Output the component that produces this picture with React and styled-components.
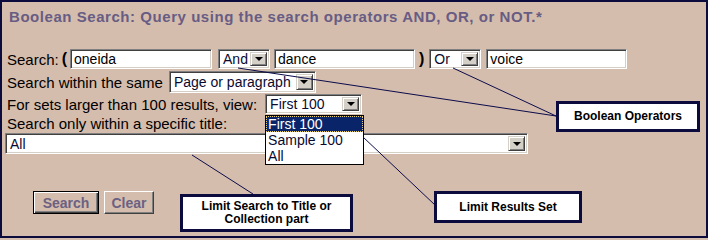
import React from 'react'
import styled, { createGlobalStyle } from 'styled-components'

const GlobalStyle = createGlobalStyle`
  html, body { margin: 0; padding: 0; background: #d5bdad; }
  body { font-family: "Liberation Sans", Arial, sans-serif; }
`

const Frame = styled.div`
  position: relative;
  width: 708px;
  height: 238px;
  box-sizing: border-box;
  border: 2px solid #0b0b3d;
  background: #d5bdad;
  padding-left: 3px;
  overflow: hidden;
`

const Title = styled.h1`
  margin: 0;
  box-sizing: border-box;
  height: 47px;
  padding: 6px 0 0 4px;
  font-size: 15px;
  line-height: 18px;
  letter-spacing: 0.55px;
  font-weight: bold;
  color: #675c84;
`

const Row = styled.div`
  display: flex;
  align-items: center;
  height: ${p => p.h || 20}px;
  margin-top: ${p => p.mt || 0}px;
`

const Label = styled.span`
  font-size: 15px;
  color: #000;
  margin-left: 2px;
  margin-right: ${p => p.mr ?? 5}px;
  white-space: nowrap;
`

const Paren = styled.b`
  font-size: 16px;
  margin: 0 ${p => p.mr || 5}px 0 ${p => p.ml || 0}px;
`

const sunken = `
  box-sizing: border-box;
  background: #fff;
  border: 1px solid;
  border-color: #808080 #fff #fff #808080;
  box-shadow: inset 1px 1px #404040, inset -1px -1px #d4d0c8;
`

const TextField = styled.input`
  ${sunken}
  width: ${p => p.w}px;
  height: 20px;
  margin-right: ${p => p.mr || 0}px;
  padding: 0 0 0 3px;
  font-family: "Liberation Sans", Arial, sans-serif;
  font-size: 14px;
  color: #000;
  outline: none;
`

const SelectWrap = styled.div`
  position: relative;
`

const SelectBox = styled.div`
  ${sunken}
  display: flex;
  align-items: center;
  width: ${p => p.w}px;
  height: ${p => p.h || 20}px;
  margin-right: ${p => p.mr || 0}px;
  padding: 2px;
`

const SelectText = styled.span`
  flex: 1;
  padding-left: 2px;
  font-size: 14px;
  color: #0a0a30;
  white-space: nowrap;
  overflow: hidden;
`

const ArrowBtn = styled.span`
  box-sizing: border-box;
  flex: none;
  width: 17px;
  height: 100%;
  display: grid;
  place-items: center;
  background: #d4d0c8;
  border: 1px solid;
  border-color: #d4d0c8 #404040 #404040 #d4d0c8;
  box-shadow: inset 1px 1px #fff, inset -1px -1px #808080;
  &::after {
    content: '';
    border-left: 4px solid transparent;
    border-right: 4px solid transparent;
    border-top: 4px solid #000;
  }
`

const ListBox = styled.ul`
  position: absolute;
  left: 0;
  top: 21px;
  z-index: 2;
  width: 99px;
  margin: 0;
  padding: 0;
  list-style: none;
  box-sizing: border-box;
  border: 1px solid #000;
  background: #fff;
`

const ListItem = styled.li`
  box-sizing: border-box;
  height: 16px;
  line-height: 14px;
  padding-left: 1px;
  font-size: 14px;
  color: ${p => (p.active ? '#fff' : '#0a0a30')};
  background: ${p => (p.active ? '#0a246a' : '#fff')};
  border: 1px dotted ${p => (p.active ? '#e8d070' : 'transparent')};
`

const Buttons = styled.div`
  display: flex;
  gap: 5px;
  margin: 37px 0 0 28px;
`

const Button = styled.button`
  box-sizing: border-box;
  width: ${p => p.w}px;
  height: 23px;
  padding: 0;
  font-family: "Liberation Sans", Arial, sans-serif;
  font-size: 14px;
  font-weight: bold;
  color: #6b6182;
  background: #d5bdad;
  border: 1px solid;
  border-color: ${p => (p.primary ? '#000' : '#fff #404040 #404040 #fff')};
  box-shadow: ${p =>
    p.primary
      ? 'inset 1px 1px #fff, inset -1px -1px #404040, inset -2px -2px #808080'
      : 'inset -1px -1px #808080'};
`

const Lines = styled.svg`
  position: absolute;
  left: -2px;
  top: -2px;
  z-index: 3;
  pointer-events: none;
`

const Callout = styled.div`
  position: absolute;
  z-index: 4;
  left: ${p => p.x - 2}px;
  top: ${p => p.y - 2}px;
  width: ${p => p.w}px;
  height: ${p => p.h}px;
  box-sizing: border-box;
  border: 3px solid #0b0b3d;
  background: #fff;
  display: flex;
  flex-direction: column;
  align-items: center;
  justify-content: center;
  text-align: center;
  font-size: 12px;
  line-height: 13px;
  font-weight: bold;
  color: #000;
`

const Select = ({ w, h, mr, value }) => (
  <SelectBox w={w} h={h} mr={mr}>
    <SelectText>{value}</SelectText>
    <ArrowBtn />
  </SelectBox>
)

export default function App() {
  return (
    <>
      <GlobalStyle />
      <Frame>
        <Title>Boolean Search: Query using the search operators AND, OR, or NOT.*</Title>

        <Row h={20}>
          <Label mr={0}>Search:</Label>
          <Paren ml={3} mr={3}>(</Paren>
          <TextField w={142} mr={6} defaultValue="oneida" />
          <Select w={52} mr={4} value="And" />
          <TextField w={141} defaultValue="dance" />
          <Paren ml={4} mr={5}>)</Paren>
          <Select w={52} mr={5} value="Or" />
          <TextField w={141} defaultValue="voice" />
        </Row>

        <Row h={22} mt={2}>
          <Label mr={6}>Search within the same</Label>
          <Select w={147} h={22} value="Page or paragraph" />
        </Row>

        <Row h={20} mt={1}>
          <Label mr={8}>For sets larger than 100 results, view:</Label>
          <SelectWrap>
            <Select w={97} value="First 100" />
            <ListBox>
              <ListItem active>First 100</ListItem>
              <ListItem>Sample 100</ListItem>
              <ListItem>All</ListItem>
            </ListBox>
          </SelectWrap>
        </Row>

        <Row h={19}>
          <Label>Search only within a specific title:</Label>
        </Row>

        <Row h={21}>
          <Select w={523} h={21} value="All" />
        </Row>

        <Buttons>
          <Button primary w={66}>Search</Button>
          <Button w={50}>Clear</Button>
        </Buttons>

        <Lines width="708" height="238">
          <g stroke="#0b0b4b" strokeWidth="1" fill="none">
            <line x1="238" y1="68" x2="556" y2="116" />
            <line x1="453" y1="68" x2="556" y2="116" />
            <line x1="363" y1="137" x2="435" y2="205" />
            <line x1="192" y1="155" x2="253" y2="194" />
          </g>
        </Lines>

        <Callout x={556} y={101} w={144} h={31}>Boolean Operators</Callout>
        <Callout x={180} y={194} w={173} h={38}>
          <span>Limit Search to Title or</span>
          <span>Collection part</span>
        </Callout>
        <Callout x={434} y={191} w={148} h={32}>Limit Results Set</Callout>
      </Frame>
    </>
  )
}
